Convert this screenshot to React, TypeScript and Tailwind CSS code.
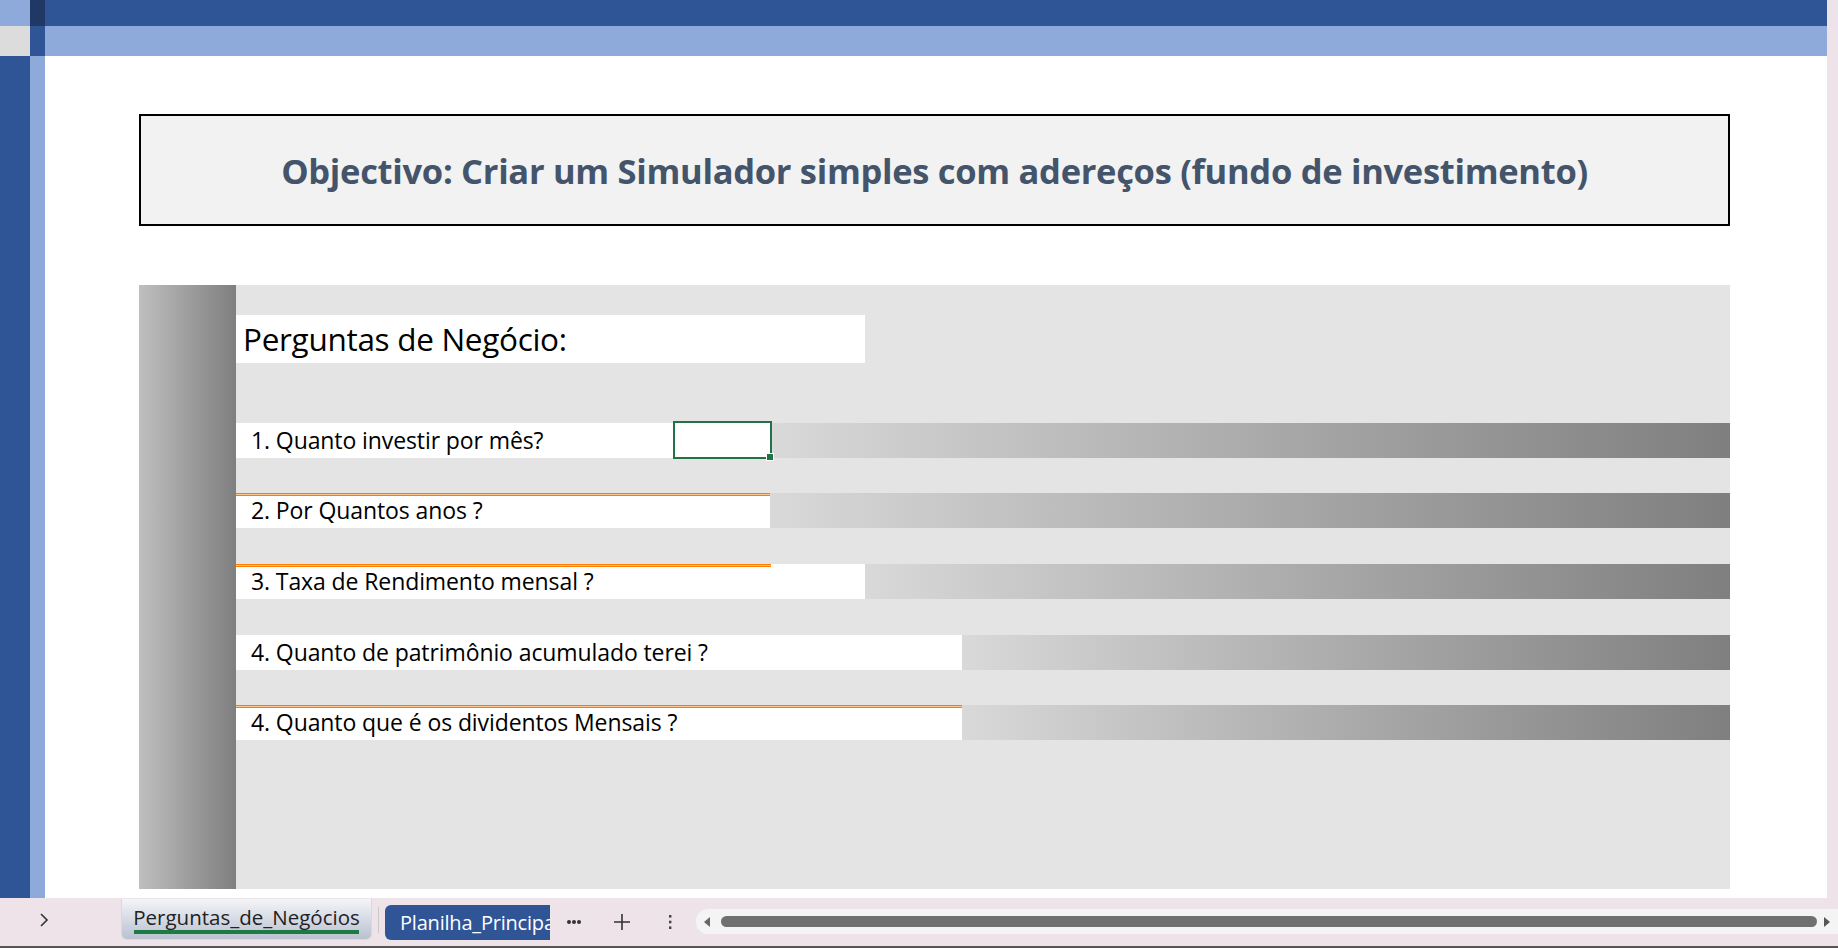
import React from "react";

const ROWS = [
  { text: "1. Quanto investir por mês?", white: 535, line: 0, selected: true, gap: 60 },
  { text: "2. Por Quantos anos ?", white: 534, line: 534, selected: false, gap: 35 },
  { text: "3. Taxa de Rendimento mensal ?", white: 629, line: 535, selected: false, gap: 36 },
  { text: "4. Quanto de patrimônio acumulado terei ?", white: 726, line: 0, selected: false, gap: 36 },
  { text: "4. Quanto que é os dividentos Mensais ?", white: 726, line: 726, selected: false, gap: 35 },
];

function QuestionRow({ row }: { row: (typeof ROWS)[number] }) {
  return (
    <div className="flex h-[35px]" style={{ marginTop: row.gap }}>
      <div
        className="relative flex h-full items-center bg-white pl-[15px] text-[23px] tracking-[-0.1px] text-black"
        style={{ width: row.white }}
      >
        {row.line > 0 && (
          <div
            className="absolute left-0 top-0 h-[3px] border-y border-[#ff7c00] bg-[#ffc58a]"
            style={{ width: row.line }}
          />
        )}
        <span>{row.text}</span>
        {row.selected && (
          <div className="absolute right-[-1px] top-[-2px] h-[38px] w-[99px] border-2 border-[#217346]">
            <div className="absolute bottom-[-3px] right-[-3px] h-[6px] w-[6px] bg-[#217346] outline outline-1 outline-white" />
          </div>
        )}
      </div>
      <div className="h-full flex-1 bg-gradient-to-r from-[#d9d9d9] to-[#7f7f7f]" />
    </div>
  );
}

export default function App() {
  return (
    <div
      className="flex h-[948px] w-[1838px] flex-col overflow-hidden bg-white"
      style={{ fontFamily: '"Open Sans", "Noto Sans", sans-serif' }}
    >
      {/* column header strip */}
      <div className="flex h-[26px]">
        <div className="w-[30px] bg-[#8eaadb]" />
        <div className="w-[15px] bg-[#1f3864]" />
        <div className="flex-1 bg-[#2f5597]" />
        <div className="w-[11px] bg-[#ede3e8]" />
      </div>
      <div className="flex h-[30px]">
        <div className="w-[30px] bg-[#dcdcdc]" />
        <div className="w-[15px] bg-[#2f5597]" />
        <div className="flex-1 bg-[#8eaadb]" />
        <div className="w-[11px] bg-[#ede3e8]" />
      </div>

      {/* sheet */}
      <div className="flex min-h-0 flex-1">
        <div className="w-[30px] bg-[#2f5597]" />
        <div className="w-[15px] bg-[#8eaadb]" />
        <div className="flex-1 pl-[94px] pt-[58px]">
          <div className="flex h-[112px] w-[1591px] items-center justify-center border-2 border-black bg-[#f2f2f2] pt-[2px]">
            <h1
              className="whitespace-nowrap text-[34.5px] font-bold text-[#44546a]"
              style={{ fontFamily: '"Open Sans", sans-serif', letterSpacing: "-0.3px" }}
            >
              Objectivo: Criar um Simulador simples com adereços (fundo de investimento)
            </h1>
          </div>

          <div className="mt-[59px] flex h-[604px] w-[1591px] bg-[#e4e4e4]">
            <div className="w-[97px] bg-gradient-to-r from-[#bfbfbf] to-[#7f7f7f]" />
            <div className="flex flex-1 flex-col pt-[30px]">
              <div className="flex h-[48px] w-[629px] items-center bg-white pl-[7px] text-[31.5px] tracking-[-0.3px] text-black">
                Perguntas de Negócio:
              </div>
              {ROWS.map((row) => (
                <QuestionRow key={row.text} row={row} />
              ))}
            </div>
          </div>
        </div>
        <div className="w-[11px] bg-[#ede3e8]" />
      </div>

      {/* sheet tabs */}
      <div className="flex h-[50px] items-start border-b-2 border-[#555] bg-[#ede3e8] pt-[1px] text-[20.5px]">
        <div className="flex h-[42px] w-[121px] items-center pl-[38px]">
          <svg width="12" height="18" viewBox="0 0 12 18" fill="none" stroke="#333" strokeWidth="1.6">
            <path d="M3 3l6 6-6 6" />
          </svg>
        </div>
        <div className="relative flex h-[41px] w-[251px] items-start justify-center rounded-b-[6px] border border-t-0 border-[#d8d8e0] bg-gradient-to-b from-[#f4f5f8] to-[#b9c1d0] pt-[3px] text-[#222]">
          <span>Perguntas_de_Negócios</span>
          <div className="absolute bottom-[5px] left-[12px] right-[12px] h-[4px] bg-[#1e7a45]" />
        </div>
        <div className="mx-[6px] mt-[8px] h-[26px] w-px bg-[#c8c8c8]" />
        <div className="mt-[6px] flex h-[35px] w-[165px] items-center overflow-hidden whitespace-nowrap rounded-l-[6px] bg-[#2f5597] pl-[15px] text-[20px] tracking-[-0.2px] text-white">
          Planilha_Principal
        </div>
        <div className="ml-[14px] mt-[8px] flex h-[30px] w-[20px] items-center justify-center text-[#333]">
          <svg width="16" height="6" viewBox="0 0 16 6" fill="#333">
            <circle cx="3" cy="3" r="2" />
            <circle cx="8" cy="3" r="2" />
            <circle cx="13" cy="3" r="2" />
          </svg>
        </div>
        <div className="ml-[24px] mt-[8px] flex h-[30px] w-[28px] items-center justify-center">
          <svg width="18" height="18" viewBox="0 0 18 18" stroke="#333" strokeWidth="1.6">
            <path d="M9 1v16M1 9h16" />
          </svg>
        </div>
        <div className="ml-[30px] mt-[8px] flex h-[30px] w-[8px] items-center justify-center">
          <svg width="4" height="16" viewBox="0 0 4 16" fill="#444">
            <rect x="1" y="1" width="2.4" height="2.6" />
            <rect x="1" y="6.7" width="2.4" height="2.6" />
            <rect x="1" y="12.4" width="2.4" height="2.6" />
          </svg>
        </div>
        <div className="ml-[22px] mt-[10px] flex h-[25px] flex-1 items-center rounded-l-[12px] bg-[#f4f4f4] pl-[7px]">
          <svg width="8" height="12" viewBox="0 0 8 12" fill="#666">
            <path d="M7 1L1 6l6 5z" />
          </svg>
          <div className="ml-[10px] h-[11px] w-[1096px] rounded-full bg-[#707070]" />
          <svg className="ml-[6px]" width="8" height="12" viewBox="0 0 8 12" fill="#555">
            <path d="M1 1l6 5-6 5z" />
          </svg>
        </div>
      </div>
    </div>
  );
}
